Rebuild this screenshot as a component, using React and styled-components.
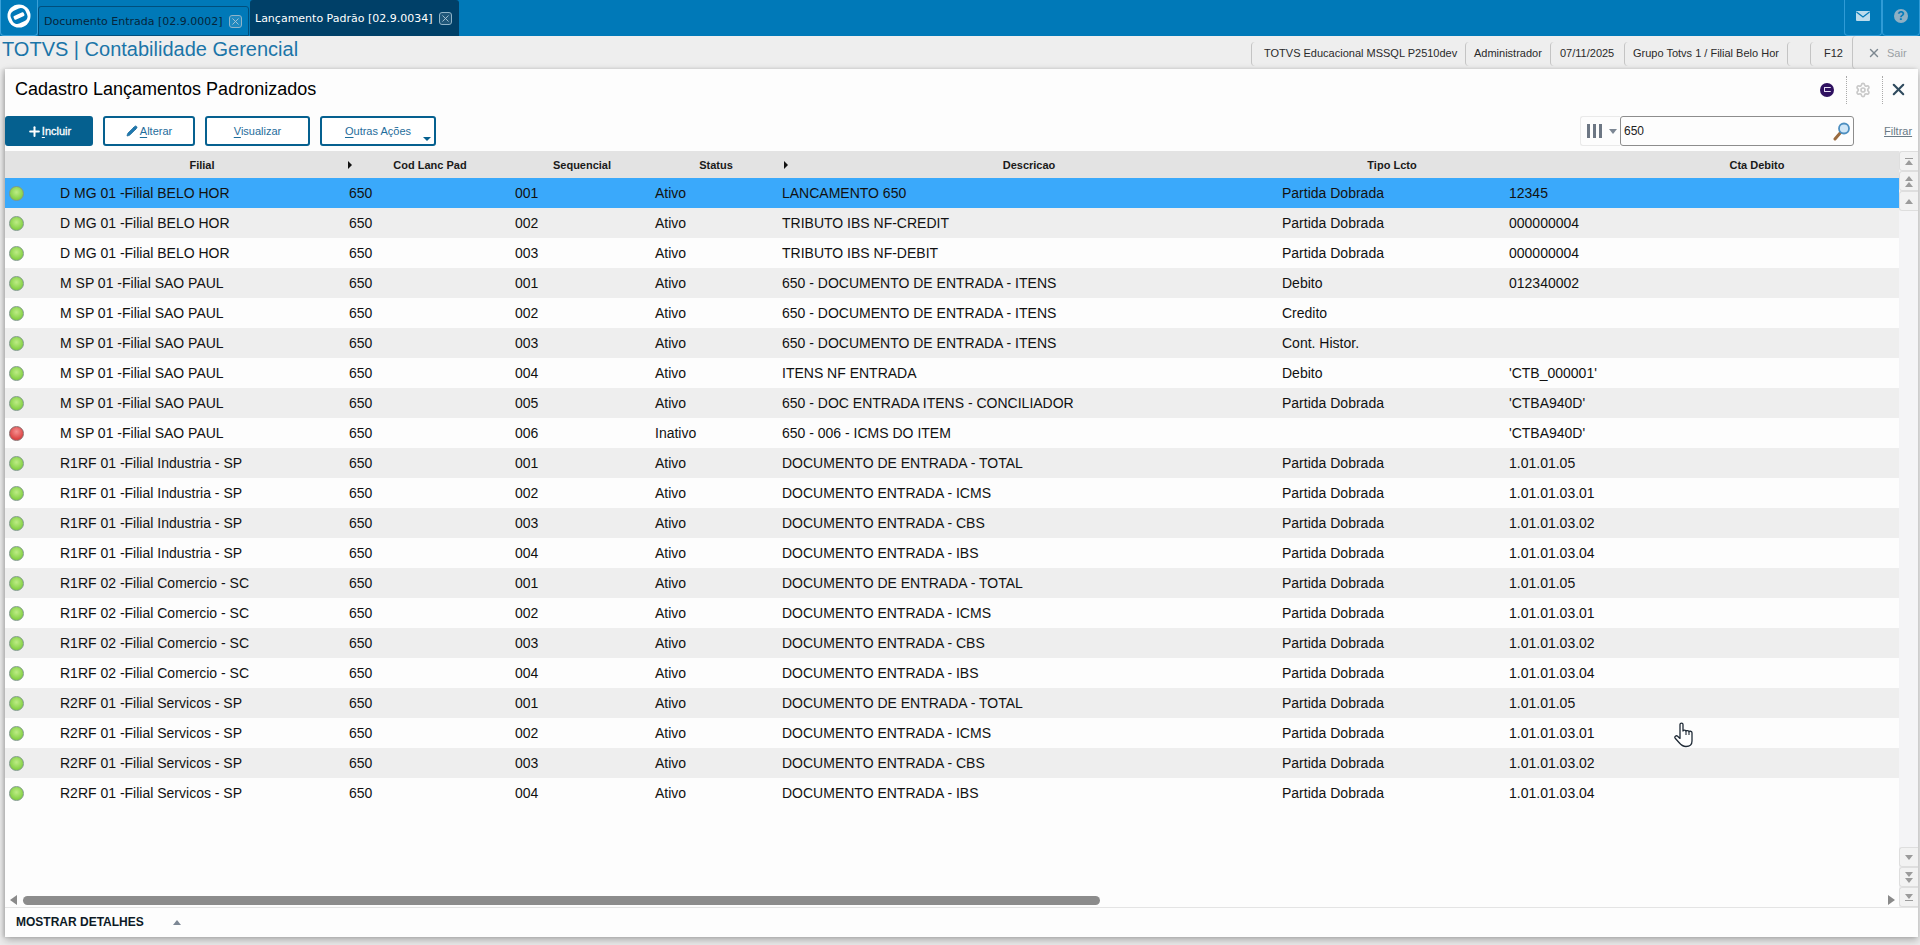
import React from 'react';
import styled, { createGlobalStyle } from 'styled-components';
import { Plus, Pencil, X, Settings } from 'lucide-react';

const GlobalStyle = createGlobalStyle`
  html, body { margin: 0; padding: 0; background: #ececec; }
  body { font-family: "Liberation Sans", Arial, sans-serif; color: #111; }
  * { box-sizing: border-box; }
`;

const COLUMNS = '50px 289px 166px 140px 127px 500px 227px 504px';
const HEAD_COLUMNS = '55px 284px 172px 132px 136px 490px 236px 494px';

const D = 'D MG 01 -Filial BELO HOR';
const M = 'M SP 01 -Filial SAO PAUL';
const R1 = 'R1RF 01 -Filial Industria - SP';
const R2 = 'R1RF 02 -Filial Comercio - SC';
const R3 = 'R2RF 01 -Filial Servicos - SP';
const PD = 'Partida Dobrada';

const rows = [
  [D, '001', 'Ativo', 'LANCAMENTO 650', PD, '12345'],
  [D, '002', 'Ativo', 'TRIBUTO IBS NF-CREDIT', PD, '000000004'],
  [D, '003', 'Ativo', 'TRIBUTO IBS NF-DEBIT', PD, '000000004'],
  [M, '001', 'Ativo', '650 - DOCUMENTO DE ENTRADA - ITENS', 'Debito', '012340002'],
  [M, '002', 'Ativo', '650 - DOCUMENTO DE ENTRADA - ITENS', 'Credito', ''],
  [M, '003', 'Ativo', '650 - DOCUMENTO DE ENTRADA - ITENS', 'Cont. Histor.', ''],
  [M, '004', 'Ativo', 'ITENS NF ENTRADA', 'Debito', "'CTB_000001'"],
  [M, '005', 'Ativo', '650 - DOC ENTRADA ITENS - CONCILIADOR', PD, "'CTBA940D'"],
  [M, '006', 'Inativo', '650 - 006 - ICMS DO ITEM', '', "'CTBA940D'"],
  [R1, '001', 'Ativo', 'DOCUMENTO DE ENTRADA - TOTAL', PD, '1.01.01.05'],
  [R1, '002', 'Ativo', 'DOCUMENTO ENTRADA - ICMS', PD, '1.01.01.03.01'],
  [R1, '003', 'Ativo', 'DOCUMENTO ENTRADA - CBS', PD, '1.01.01.03.02'],
  [R1, '004', 'Ativo', 'DOCUMENTO ENTRADA - IBS', PD, '1.01.01.03.04'],
  [R2, '001', 'Ativo', 'DOCUMENTO DE ENTRADA - TOTAL', PD, '1.01.01.05'],
  [R2, '002', 'Ativo', 'DOCUMENTO ENTRADA - ICMS', PD, '1.01.01.03.01'],
  [R2, '003', 'Ativo', 'DOCUMENTO ENTRADA - CBS', PD, '1.01.01.03.02'],
  [R2, '004', 'Ativo', 'DOCUMENTO ENTRADA - IBS', PD, '1.01.01.03.04'],
  [R3, '001', 'Ativo', 'DOCUMENTO DE ENTRADA - TOTAL', PD, '1.01.01.05'],
  [R3, '002', 'Ativo', 'DOCUMENTO ENTRADA - ICMS', PD, '1.01.01.03.01'],
  [R3, '003', 'Ativo', 'DOCUMENTO ENTRADA - CBS', PD, '1.01.01.03.02'],
  [R3, '004', 'Ativo', 'DOCUMENTO ENTRADA - IBS', PD, '1.01.01.03.04'],
];

const Page = styled.div`
  width: 1920px;
  height: 945px;
  overflow: hidden;
  position: relative;
  display: flex;
  flex-direction: column;
`;

/* barra de abas */
const TabBar = styled.div`
  height: 36px;
  flex: none;
  background: #0079b8;
  display: flex;
  align-items: flex-end;
`;

const LogoButton = styled.div`
  width: 38px;
  height: 36px;
  border: 1px solid #3aa0d8;
  border-top: 0;
  border-radius: 0 0 4px 4px;
  padding-bottom: 4px;
  display: flex;
  align-items: center;
  justify-content: center;
`;

const Tab = styled.div`
  height: ${p => (p.$active ? '36px' : '30px')};
  margin-left: ${p => (p.$active ? '1px' : '0')};
  padding-left: 5px;
  width: ${p => (p.$active ? '209px' : '211px')};
  background: ${p => (p.$active ? '#004068' : '#0079b8')};
  border: ${p => (p.$active ? '0' : '1px solid #004f7d')};
  border-radius: 3px 3px 0 0;
  color: ${p => (p.$active ? '#fff' : '#06263c')};
  font-family: "DejaVu Sans", sans-serif;
  font-size: 11px;
  display: flex;
  align-items: center;
  gap: 6px;
  white-space: nowrap;
`;

const TabClose = styled.span`
  width: 13px;
  height: 13px;
  border: 1px solid #8fb4c9;
  border-radius: 3px;
  background: rgba(255, 255, 255, 0.12);
  color: #a9c6d6;
  display: flex;
  align-items: center;
  justify-content: center;
`;

const TabSpacer = styled.div`
  flex: 1;
`;

const TopIcon = styled.div`
  width: 38px;
  height: 36px;
  border: 1px solid #2f9bd6;
  border-top: 0;
  border-radius: 0 0 4px 4px;
  padding-bottom: 3px;
  display: flex;
  align-items: center;
  justify-content: center;
`;

const HelpDot = styled.span`
  width: 14px;
  height: 14px;
  border-radius: 50%;
  background: #8fb0c4;
  color: #0079b8;
  font-size: 12px;
  font-weight: 700;
  line-height: 14px;
  text-align: center;
`;

/* barra do modulo */
const ModuleBar = styled.div`
  height: 33px;
  flex: none;
  background: #eeeeee;
  display: flex;
  align-items: flex-start;
`;

const ModuleTitle = styled.div`
  padding-left: 2px;
  font-size: 20px;
  line-height: 26px;
  color: #1b75a8;
  flex: 1;
  white-space: nowrap;
`;

const Info = styled.div`
  height: 24px;
  margin-top: 6px;
  width: ${p => p.$w}px;
  padding-left: ${p => p.$pad || 0}px;
  border-left: 1px solid #c4c4c4;
  border-radius: 4px 0 0 4px;
  font-size: 11px;
  line-height: 23px;
  color: #2a2a2a;
  white-space: nowrap;
`;

const SairBox = styled.div`
  width: 68px;
  height: 33px;
  border-left: 1px solid #c4c4c4;
  border-radius: 4px 0 0 4px;
  padding-left: 14px;
  display: flex;
  align-items: center;
  gap: 6px;
  font-size: 11px;
  color: #9aa0a4;
`;

/* painel */
const Panel = styled.div`
  margin-left: 5px;
  width: 1913px;
  height: 868px;
  flex: none;
  background: #fdfdfd;
  box-shadow: 0 3px 8px rgba(0, 0, 0, 0.28), -2px 0 3px rgba(0, 0, 0, 0.12);
  display: flex;
  flex-direction: column;
`;

const TitleRow = styled.div`
  height: 47px;
  flex: none;
  display: flex;
  align-items: center;
  padding-left: 10px;
`;

const Title = styled.h1`
  margin: 0;
  flex: 1;
  font-size: 18px;
  font-weight: 400;
  color: #000;
  padding-bottom: 7px;
`;

const TitleIcons = styled.div`
  display: flex;
  align-items: center;
  height: 28px;
  margin-bottom: 6px;
`;

const PurpleDot = styled.span`
  width: 14px;
  height: 14px;
  border-radius: 50%;
  background: #2f1160;
  display: flex;
  align-items: center;
  justify-content: center;
  margin-right: 12px;
  &::after {
    content: '';
    width: 6px;
    height: 3px;
    border: 1px solid #e8e0f5;
    border-right: 0;
    border-radius: 1px;
  }
`;

const DottedCell = styled.span`
  width: 36px;
  height: 28px;
  padding-right: 4px;
  border-left: 1px dotted #aaa;
  display: flex;
  align-items: center;
  justify-content: center;
  color: ${p => p.$color};
`;

const Toolbar = styled.div`
  height: 35px;
  flex: none;
  display: flex;
  align-items: flex-start;
`;

const ActionButton = styled.button`
  height: 30px;
  width: ${p => p.$w}px;
  margin-right: 10px;
  border: 2px solid #05608f;
  border-radius: 3px;
  background: ${p => (p.$primary ? '#05608f' : '#fff')};
  color: ${p => (p.$primary ? '#fff' : '#1f6d9b')};
  font-family: "Liberation Sans", Arial, sans-serif;
  font-size: 11px;
  -webkit-text-stroke: ${p => (p.$primary ? '0.3px #fff' : '0')};
  display: flex;
  align-items: center;
  justify-content: center;
  gap: ${p => (p.$primary ? 0 : 2)}px;
  padding: 0;
  position: relative;
  u { text-underline-offset: 2px; }
`;

const DropMark = styled.span`
  position: absolute;
  right: 3px;
  bottom: 3px;
  border-left: 4px solid transparent;
  border-right: 4px solid transparent;
  border-top: 4px solid #05608f;
`;

const ToolSpacer = styled.div`
  flex: 1;
`;

const ColumnPicker = styled.div`
  width: 40px;
  height: 30px;
  border: 1px solid #eaeaea;
  border-right: 0;
  border-radius: 3px 0 0 3px;
  display: flex;
  align-items: center;
  padding-left: 6px;
  gap: 7px;
`;

const Bars = styled.span`
  width: 15px;
  height: 14px;
  background: repeating-linear-gradient(90deg, #6d7784 0 3px, transparent 3px 6px);
`;

const Caret = styled.span`
  border-left: 4px solid transparent;
  border-right: 4px solid transparent;
  border-${p => (p.$up ? 'bottom' : 'top')}: 5px solid ${p => p.$color || '#7c8794'};
`;

const SearchBox = styled.div`
  width: 234px;
  height: 30px;
  border: 1px solid #8d8d8d;
  border-radius: 3px;
  display: flex;
  align-items: center;
  justify-content: space-between;
  padding: 0 1px 0 3px;
  font-size: 12px;
  color: #222;
`;

const FilterLink = styled.a`
  margin: 0 6px 0 30px;
  width: 28px;
  font-size: 11px;
  line-height: 30px;
  color: #6a7a86;
  text-decoration: underline;
`;

/* grid */
const GridArea = styled.div`
  flex: 1;
  display: flex;
  min-height: 0;
`;

const TableWrap = styled.div`
  width: 1894px;
  flex: none;
  overflow: hidden;
`;

const HeadRow = styled.div`
  display: grid;
  grid-template-columns: ${HEAD_COLUMNS};
  width: 2003px;
  height: 27px;
  background: #e3e3e3;
  align-items: center;
`;

const Row = styled.div`
  display: grid;
  grid-template-columns: ${COLUMNS};
  width: 2003px;
  height: 30px;
  background: ${p => p.$bg};
  align-items: center;
`;

const HeadCell = styled.div`
  font-size: 11px;
  font-weight: 700;
  color: #1a1a1a;
  text-align: center;
  position: relative;
`;

const SortMark = styled.span`
  position: absolute;
  left: ${p => p.$left}px;
  top: 2px;
  border-top: 4px solid transparent;
  border-bottom: 4px solid transparent;
  border-left: 4px solid #111;
`;

const Cell = styled.div`
  font-size: 14px;
  color: #111;
  padding-left: 5px;
  white-space: nowrap;
  overflow: hidden;
`;

const Led = styled.span`
  display: block;
  width: 15px;
  height: 15px;
  margin-left: 4px;
  border-radius: 50%;
  border: 1px solid ${p => (p.$off ? '#8a6a6a' : '#7f9a88')};
  background: ${p => (p.$off
    ? 'radial-gradient(circle at 50% 35%, #f59090, #dc4444 70%)'
    : 'radial-gradient(circle at 50% 40%, #bdec86, #85d045 70%)')};
`;

const ScrollColumn = styled.div`
  width: 19px;
  flex: none;
  background: #f4f4f6;
  display: flex;
  flex-direction: column;
  justify-content: space-between;
`;

const ScrollGroup = styled.div`
  display: flex;
  flex-direction: column;
`;

const ScrollButton = styled.div`
  height: 20px;
  background: #f2f2f2;
  border: 1px solid #dedede;
  border-right: 0;
  border-radius: 3px 0 0 3px;
  display: flex;
  flex-direction: column;
  align-items: center;
  justify-content: center;
  gap: 1px;
`;

const StopLine = styled.span`
  width: 8px;
  height: 1px;
  background: #9b9b9b;
`;

const HScrollRow = styled.div`
  height: 12px;
  flex: none;
  display: flex;
  align-items: center;
  padding: 0 0 2px 5px;
  position: relative;
  margin-top: -12px;
  width: 1894px;
`;

const HCaret = styled.span`
  border-top: 5px solid transparent;
  border-bottom: 5px solid transparent;
  border-${p => (p.$right ? 'left' : 'right')}: 7px solid #8a8a8a;
  margin-left: ${p => (p.$right ? 'auto' : '0')};
  margin-right: ${p => (p.$right ? '4px' : '0')};
`;

const HThumb = styled.span`
  width: 1077px;
  height: 9px;
  margin-left: 6px;
  background: #8c8c8c;
  border-radius: 5px;
`;

const Footer = styled.div`
  height: 30px;
  flex: none;
  border-top: 1px solid #e4e4e4;
  display: flex;
  align-items: center;
  padding: 0 0 1px 11px;
  gap: 29px;
  font-size: 12px;
  font-weight: 700;
  color: #0d1a26;
`;

const HandCursor = styled.svg`
  position: absolute;
  left: 1674px;
  top: 722px;
`;

function LogoMark() {
  return (
    <svg width="24" height="24" viewBox="0 0 24 24">
      <circle cx="12" cy="12" r="11.5" fill="#fff" />
      <rect x="4" y="5" width="16" height="14" rx="5" fill="#0079b8" transform="rotate(-25 12 12)" />
      <rect x="6.5" y="10" width="11" height="4" rx="1" fill="#fff" transform="rotate(-25 12 12)" />
    </svg>
  );
}

function ScrollArrows({ kind }) {
  const up = kind.startsWith('up');
  const double = kind.endsWith('double');
  const stop = kind.endsWith('stop');
  return (
    <ScrollButton>
      {stop && up && <StopLine />}
      <Caret $up={up} $color="#9b9b9b" />
      {double && <Caret $up={up} $color="#9b9b9b" />}
      {stop && !up && <StopLine />}
    </ScrollButton>
  );
}

export default function App() {
  return (
    <Page>
      <GlobalStyle />
      <TabBar>
        <LogoButton><LogoMark /></LogoButton>
        <Tab>
          Documento Entrada [02.9.0002]
          <TabClose><X size={11} strokeWidth={2} /></TabClose>
        </Tab>
        <Tab $active>
          Lançamento Padrão [02.9.0034]
          <TabClose><X size={11} strokeWidth={2} /></TabClose>
        </Tab>
        <TabSpacer />
        <TopIcon>
          <svg width="14" height="10" viewBox="0 0 14 10">
            <rect width="14" height="10" rx="1" fill="#bcdcec" />
            <path d="M0.5 1 L7 6 L13.5 1" fill="none" stroke="#0079b8" strokeWidth="1.2" />
          </svg>
        </TopIcon>
        <TopIcon><HelpDot>?</HelpDot></TopIcon>
      </TabBar>

      <ModuleBar>
        <ModuleTitle>TOTVS | Contabilidade Gerencial</ModuleTitle>
        <Info $w={214} $pad={12}>TOTVS Educacional MSSQL P2510dev</Info>
        <Info $w={85} $pad={8}>Administrador</Info>
        <Info $w={74} $pad={9}>07/11/2025</Info>
        <Info $w={163} $pad={8}>Grupo Totvs 1 / Filial Belo Hor</Info>
        <Info $w={23} />
        <Info $w={42} $pad={13}>F12</Info>
        <SairBox><X size={14} strokeWidth={2.5} color="#7d8790" />Sair</SairBox>
      </ModuleBar>

      <Panel>
        <TitleRow>
          <Title>Cadastro Lançamentos Padronizados</Title>
          <TitleIcons>
            <PurpleDot />
            <DottedCell $color="#c9c9c9"><Settings size={16} strokeWidth={2.5} /></DottedCell>
            <DottedCell $color="#2f4a5e"><X size={19} strokeWidth={2.6} /></DottedCell>
          </TitleIcons>
        </TitleRow>

        <Toolbar>
          <ActionButton $primary $w={88}>
            <Plus size={15} strokeWidth={3.2} /><span><u>I</u>ncluir</span>
          </ActionButton>
          <ActionButton $w={92}>
            <Pencil size={12} fill="#1f78b0" strokeWidth={1.5} /><span><u>A</u>lterar</span>
          </ActionButton>
          <ActionButton $w={105}><span><u>V</u>isualizar</span></ActionButton>
          <ActionButton $w={116}>
            <span><u>O</u>utras Ações</span><DropMark />
          </ActionButton>
          <ToolSpacer />
          <ColumnPicker><Bars /><Caret /></ColumnPicker>
          <SearchBox>
            650
            <svg width="20" height="20" viewBox="0 0 20 20">
              <line x1="3" y1="18" x2="9" y2="11" stroke="#9a6b3f" strokeWidth="3" strokeLinecap="round" />
              <circle cx="12" cy="7.5" r="5" fill="#cfe6f7" stroke="#4d8fc0" strokeWidth="1.8" />
            </svg>
          </SearchBox>
          <FilterLink>Filtrar</FilterLink>
        </Toolbar>

        <GridArea>
          <TableWrap>
            <HeadRow>
              <HeadCell />
              <HeadCell>Filial<SortMark $left={288} /></HeadCell>
              <HeadCell>Cod Lanc Pad</HeadCell>
              <HeadCell>Sequencial</HeadCell>
              <HeadCell>Status<SortMark $left={136} /></HeadCell>
              <HeadCell>Descricao</HeadCell>
              <HeadCell>Tipo Lcto</HeadCell>
              <HeadCell>Cta Debito</HeadCell>
            </HeadRow>
            {rows.map((r, i) => (
              <Row key={i} $bg={i === 0 ? '#3aa9fb' : i % 2 ? '#eeeeee' : '#fdfdfd'}>
                <div><Led $off={r[2] === 'Inativo'} /></div>
                <Cell>{r[0]}</Cell>
                <Cell>650</Cell>
                <Cell>{r[1]}</Cell>
                <Cell>{r[2]}</Cell>
                <Cell>{r[3]}</Cell>
                <Cell>{r[4]}</Cell>
                <Cell>{r[5]}</Cell>
              </Row>
            ))}
          </TableWrap>
          <ScrollColumn>
            <ScrollGroup>
              <ScrollArrows kind="up-stop" />
              <ScrollArrows kind="up-double" />
              <ScrollArrows kind="up" />
            </ScrollGroup>
            <ScrollGroup>
              <ScrollArrows kind="down" />
              <ScrollArrows kind="down-double" />
              <ScrollArrows kind="down-stop" />
            </ScrollGroup>
          </ScrollColumn>
        </GridArea>
        <HScrollRow>
          <HCaret />
          <HThumb />
          <HCaret $right />
        </HScrollRow>
        <Footer>
          MOSTRAR DETALHES
          <Caret $up />
        </Footer>
      </Panel>

      <HandCursor width="20" height="26" viewBox="0 0 20 26">
        <path
          d="M6 14 L6 2.5 C6 0.6 9 0.6 9 2.5 L9 9 C9 7.8 12 7.8 12 9.3 C12 8.2 15 8.2 15 9.8 C15 8.8 18 9 18 10.8 L18 19 C18 22.5 15.5 24.5 12 24.5 C8.5 24.5 7 23 5 20.5 L1.2 16.2 C0 14.6 2.2 13 3.6 14.2 L6 16.4 Z"
          fill="#fff"
          stroke="#1f2a36"
          strokeWidth="1.3"
          strokeLinejoin="round"
        />
        <path d="M12 9.3 L12 13 M15 9.8 L15 13" stroke="#1f2a36" strokeWidth="1.1" fill="none" />
      </HandCursor>
    </Page>
  );
}
